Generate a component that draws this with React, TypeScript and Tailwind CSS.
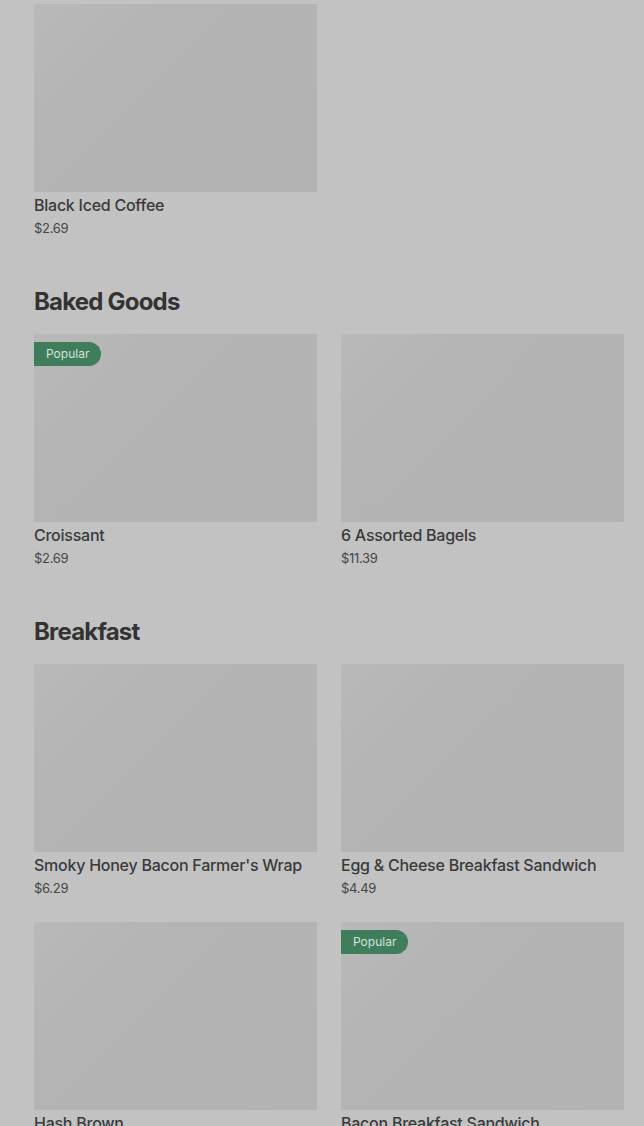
import React from "react";

type Item = { name: string; price: string; popular?: boolean };

type Section = { title?: string; items: Item[] };

const sections: Section[] = [
  { items: [{ name: "Black Iced Coffee", price: "$2.69" }] },
  {
    title: "Baked Goods",
    items: [
      { name: "Croissant", price: "$2.69", popular: true },
      { name: "6 Assorted Bagels", price: "$11.39" },
    ],
  },
  {
    title: "Breakfast",
    items: [
      { name: "Smoky Honey Bacon Farmer's Wrap", price: "$6.29" },
      { name: "Egg & Cheese Breakfast Sandwich", price: "$4.49" },
      { name: "Hash Brown", price: "$1.89" },
      { name: "Bacon Breakfast Sandwich", price: "$4.99", popular: true },
    ],
  },
];

const ItemCard = ({ item }: { item: Item }) => (
  <div className="flex flex-col">
    <div className="relative h-[188px] w-full bg-[linear-gradient(135deg,#b9b9b9_0%,#b4b4b4_30%,#b3b3b3_100%)]">
      {item.popular && (
        <span className="absolute left-0 top-2 flex h-6 items-center rounded-r-full bg-[#3f7d5c] px-3 text-xs text-[#d3e3d8]">
          Popular
        </span>
      )}
    </div>
    <p className="mt-px text-base font-medium leading-6 tracking-[-0.25px] text-[#3a3a3a]">
      {item.name}
    </p>
    <p className="mt-px text-[13px] leading-5 tracking-[-0.3px] text-[#464646]">
      {item.price}
    </p>
  </div>
);

export default function App() {
  return (
    <div
      className="min-h-screen overflow-hidden bg-[#c2c2c2] pl-[34px] pr-[20px] pt-1"
      style={{ fontFamily: 'Inter, "Liberation Sans", Arial, sans-serif' }}
    >
      {sections.map((section, i) => (
        <section key={i} className={section.title ? "pt-[48px]" : ""}>
          {section.title && (
            <h2 className="mb-[16px] text-2xl font-bold leading-8 tracking-[-0.8px] text-[#333333]">
              {section.title}
            </h2>
          )}
          <div className="grid grid-cols-2 gap-x-6 gap-y-[24px]">
            {section.items.map((item) => (
              <ItemCard key={item.name} item={item} />
            ))}
          </div>
        </section>
      ))}
    </div>
  );
}
